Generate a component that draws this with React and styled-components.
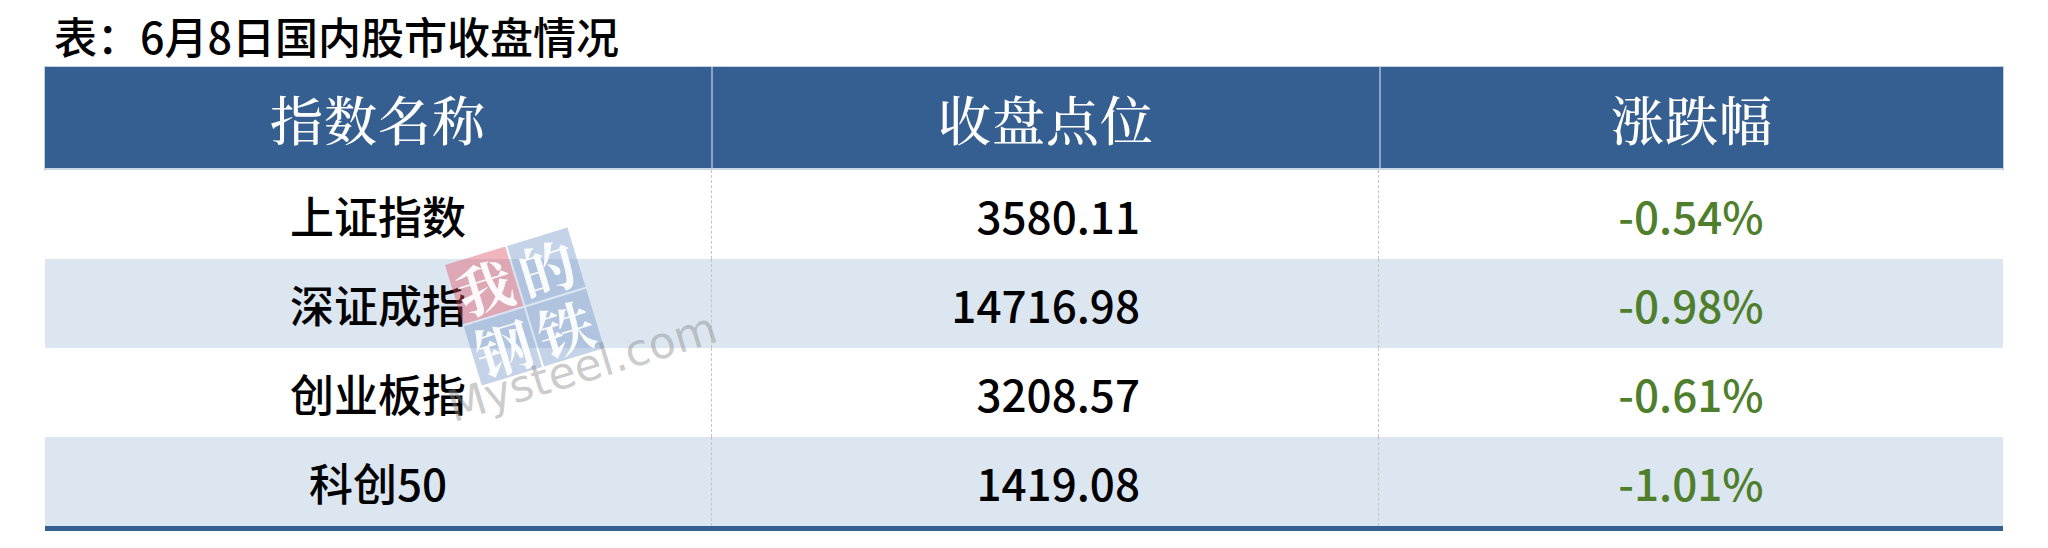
import * as React from "react";
import styled, { createGlobalStyle } from "styled-components";

const rows = [
  { name: "上证指数", close: "3580.11", change: "-0.54%" },
  { name: "深证成指", close: "14716.98", change: "-0.98%" },
  { name: "创业板指", close: "3208.57", change: "-0.61%" },
  { name: "科创50", close: "1419.08", change: "-1.01%" },
];

export default function App() {
  return (
    <Page>
      <GlobalStyle />
      <Caption>表：6月8日国内股市收盘情况</Caption>
      <TableWrap>
        <HeadRow>
          <HeadCell>指数名称</HeadCell>
          <HeadCell $divider>收盘点位</HeadCell>
          <HeadCell $divider>涨跌幅</HeadCell>
        </HeadRow>
        {rows.map((r, i) => (
          <BodyRow key={r.name} $shaded={i % 2 === 1} $last={i === rows.length - 1}>
            <NameCell>{r.name}</NameCell>
            <CloseCell>{r.close}</CloseCell>
            <ChangeCell>{r.change}</ChangeCell>
          </BodyRow>
        ))}
        <Watermark>
          <LogoGrid>
            <LogoCell $red>我</LogoCell>
            <LogoCell>的</LogoCell>
            <LogoCell>钢</LogoCell>
            <LogoCell>铁</LogoCell>
          </LogoGrid>
          <LogoText>Mysteel.com</LogoText>
        </Watermark>
      </TableWrap>
    </Page>
  );
}

const GlobalStyle = createGlobalStyle`
  body {
    margin: 0;
    background: #fff;
  }
`;

const Page = styled.div`
  width: 2048px;
  height: 548px;
  box-sizing: border-box;
  padding: 14px 45px 0 45px;
  font-family: "Noto Sans CJK SC", "Noto Sans", sans-serif;
  color: #000;
`;

const Caption = styled.div`
  font-size: 43px;
  font-weight: 500;
  line-height: 42px;
  padding-left: 9px;
  margin-bottom: 11px;
`;

const TableWrap = styled.div`
  position: relative;
  width: 1958px;
`;

const HeadRow = styled.div`
  display: grid;
  grid-template-columns: 666px 668px 624px;
  height: 101px;
  background: #365f91;
  box-shadow: 0 0 0 1px #c3d1e2;
  border-bottom: 2px solid #c9d6e6;
`;

const HeadCell = styled.div`
  display: flex;
  align-items: center;
  justify-content: center;
  color: #fff;
  font-family: "Noto Serif CJK SC", "Noto Sans CJK SC", serif;
  font-size: 53px;
  font-weight: 500;
  letter-spacing: 1px;
  border-left: ${(p) => (p.$divider ? "2px solid #8ea6c4" : "none")};
`;

const BodyRow = styled.div`
  display: grid;
  grid-template-columns: 666px 668px 624px;
  height: 89px;
  background: ${(p) => (p.$shaded ? "#dce6f1" : "#fff")};
  border-bottom: ${(p) => (p.$last ? "5px solid #365f91" : "none")};
  font-size: 44px;
  font-weight: 500;
`;

const Cell = styled.div`
  display: flex;
  align-items: center;
`;

const NameCell = styled(Cell)`
  justify-content: center;
`;

const CloseCell = styled(Cell)`
  justify-content: flex-end;
  padding-right: 238px;
  border-left: 1px dashed #c4c4c4;
  border-right: 1px dashed #c4c4c4;
`;

const ChangeCell = styled(Cell)`
  justify-content: center;
  color: #4f7f2c;
`;

const Watermark = styled.div`
  position: absolute;
  left: 400px;
  top: 198px;
  width: 360px;
  transform: rotate(-17deg);
  transform-origin: 0 0;
  pointer-events: none;
`;

const LogoGrid = styled.div`
  display: grid;
  grid-template-columns: 63px 63px;
  grid-template-rows: 62px 62px;
  gap: 2px;
`;

const LogoCell = styled.div`
  display: flex;
  align-items: center;
  justify-content: center;
  background: ${(p) => (p.$red ? "rgba(221, 80, 98, 0.42)" : "rgba(110, 145, 200, 0.4)")};
  color: rgba(255, 255, 255, 0.92);
  font-family: "Noto Serif CJK SC", "Noto Sans CJK SC", serif;
  font-size: 56px;
  font-weight: 700;
  line-height: 1;
`;

const LogoText = styled.div`
  margin-top: -10px;
  margin-left: -38px;
  font-family: "DejaVu Sans", sans-serif;
  font-size: 44px;
  line-height: 1;
  color: rgba(140, 140, 140, 0.45);
`;
